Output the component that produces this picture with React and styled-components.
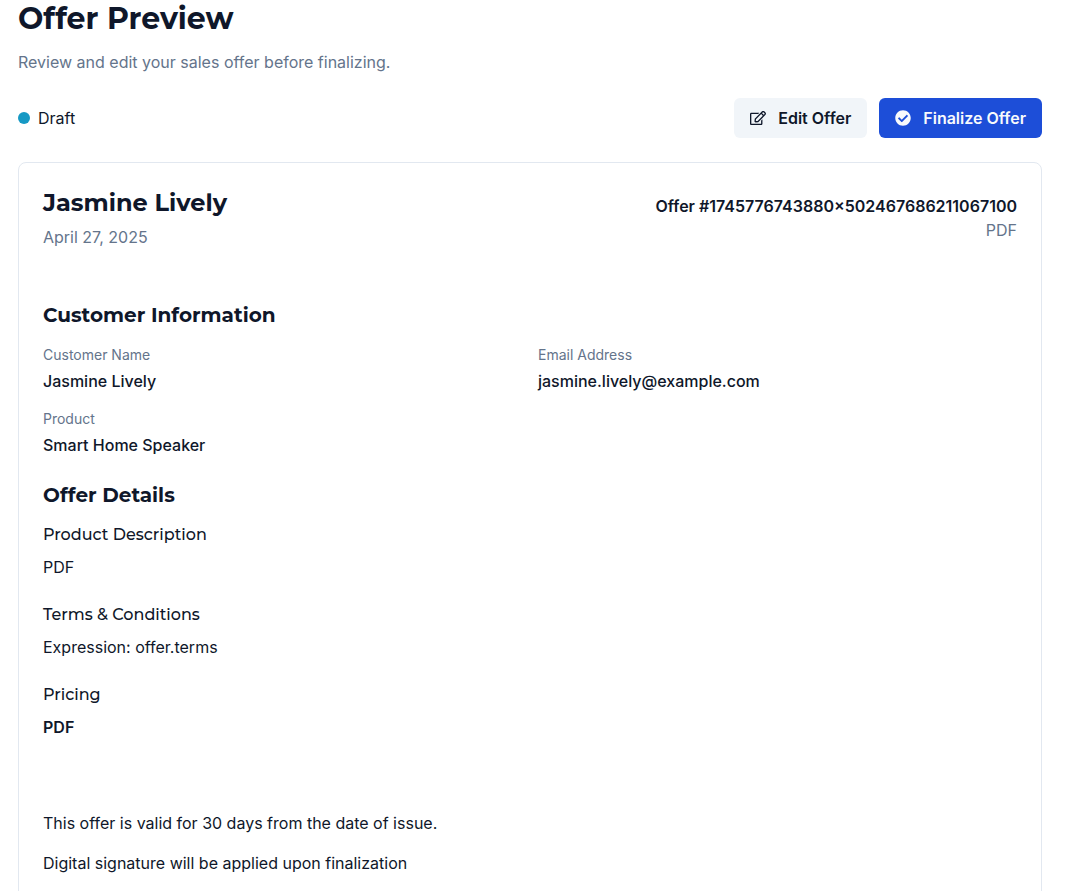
import React from 'react';
import styled, { createGlobalStyle } from 'styled-components';
import { FaRegEdit, FaCheckCircle } from 'react-icons/fa';

const Global = createGlobalStyle`
  html, body { margin: 0; padding: 0; background: #fff; height: 891px; overflow: hidden; }
  body { font-family: Inter, "Liberation Sans", sans-serif; color: #0f172a; }
  * { box-sizing: border-box; }
`;
const heading = `font-family: Montserrat, Inter, "Liberation Sans", sans-serif; font-weight: 700; color: #0f172a; margin: 0;`;
const Page = styled.div`
  width: 1060px;
  padding: 0 18px;
`;
const Title = styled.h1`
  ${heading}
  font-size: 30px;
  line-height: 36px;
  margin-top: 1px;
`;
const Subtitle = styled.p`
  margin: 15px 0 0;
  font-size: 16px;
  line-height: 20px;
  color: #64748b;
`;
const Toolbar = styled.div`
  display: flex;
  align-items: center;
  justify-content: space-between;
  margin-top: 26px;
`;
const Status = styled.div`
  display: flex;
  align-items: center;
  gap: 8px;
  font-size: 16px;
  line-height: 24px;
`;
const Dot = styled.span`
  width: 12px;
  height: 12px;
  border-radius: 50%;
  background: #1699c4;
`;
const Actions = styled.div`
  display: flex;
  gap: 12px;
`;
const Button = styled.button`
  display: flex;
  align-items: center;
  gap: 12px;
  height: 40px;
  padding: 0 16px;
  border: 0;
  border-radius: 6px;
  font: 600 16px/24px Inter, sans-serif;
  background: ${p => (p.$primary ? '#1d4ed8' : '#f1f5f9')};
  color: ${p => (p.$primary ? '#f8fafc' : '#0f172a')};
  svg { width: 16px; height: 16px; }
`;
const Card = styled.section`
  margin-top: 24px;
  padding: 24px;
  height: 900px;
  border: 1px solid #e2e8f0;
  border-radius: 8px;
  background: #fff;
`;
const CardHead = styled.header`
  display: flex;
  justify-content: space-between;
  align-items: flex-start;
`;
const Name = styled.h2`
  ${heading}
  font-size: 24px;
  line-height: 32px;
`;
const DateText = styled.div`
  margin-top: 6px;
  font-size: 16px;
  line-height: 24px;
  color: #64748b;
`;
const OfferMeta = styled.div`
  text-align: right;
  padding-top: 7px;
`;
const OfferNumber = styled.div`
  font-weight: 600;
  font-size: 16px;
  line-height: 24px;
`;
const Muted = styled.div`
  font-size: 16px;
  line-height: 24px;
  color: #64748b;
`;
const SectionTitle = styled.h3`
  ${heading}
  font-size: 20px;
  line-height: 28px;
  margin-top: ${p => p.$top}px;
`;
const Grid = styled.div`
  display: grid;
  grid-template-columns: 1fr 1fr;
  column-gap: 16px;
  row-gap: 16px;
  margin-top: 16px;
`;
const Label = styled.div`
  font-size: 14px;
  line-height: 20px;
  color: #64748b;
`;
const Value = styled.div`
  margin-top: 4px;
  font-size: 16px;
  line-height: 24px;
  font-weight: 500;
`;
const SubHeading = styled.h4`
  font-family: Montserrat, Inter, sans-serif;
  font-weight: 500;
  font-size: 16px;
  line-height: 24px;
  margin: ${p => p.$top}px 0 0;
`;
const Body = styled.p`
  margin: 8px 0 0;
  font-size: 16px;
  line-height: 24px;
  font-weight: ${p => (p.$bold ? 600 : 400)};
`;
const Footer = styled.div`
  margin-top: 72px;
  font-size: 16px;
  line-height: 24px;
  display: flex;
  flex-direction: column;
  gap: 16px;
`;

export default function App() {
  return (
    <Page>
      <Global />
      <Title>Offer Preview</Title>
      <Subtitle>Review and edit your sales offer before finalizing.</Subtitle>
      <Toolbar>
        <Status><Dot />Draft</Status>
        <Actions>
          <Button><FaRegEdit />Edit Offer</Button>
          <Button $primary><FaCheckCircle />Finalize Offer</Button>
        </Actions>
      </Toolbar>
      <Card>
        <CardHead>
          <div>
            <Name>Jasmine Lively</Name>
            <DateText>April 27, 2025</DateText>
          </div>
          <OfferMeta>
            <OfferNumber>Offer #1745776743880×502467686211067100</OfferNumber>
            <Muted>PDF</Muted>
          </OfferMeta>
        </CardHead>
        <SectionTitle $top={52}>Customer Information</SectionTitle>
        <Grid>
          <div><Label>Customer Name</Label><Value>Jasmine Lively</Value></div>
          <div><Label>Email Address</Label><Value>jasmine.lively@example.com</Value></div>
          <div><Label>Product</Label><Value>Smart Home Speaker</Value></div>
        </Grid>
        <SectionTitle $top={24}>Offer Details</SectionTitle>
        <SubHeading $top={14}>Product Description</SubHeading>
        <Body>PDF</Body>
        <SubHeading $top={24}>Terms &amp; Conditions</SubHeading>
        <Body>Expression: offer.terms</Body>
        <SubHeading $top={24}>Pricing</SubHeading>
        <Body $bold>PDF</Body>
        <Footer>
          <div>This offer is valid for 30 days from the date of issue.</div>
          <div>Digital signature will be applied upon finalization</div>
        </Footer>
      </Card>
    </Page>
  );
}
